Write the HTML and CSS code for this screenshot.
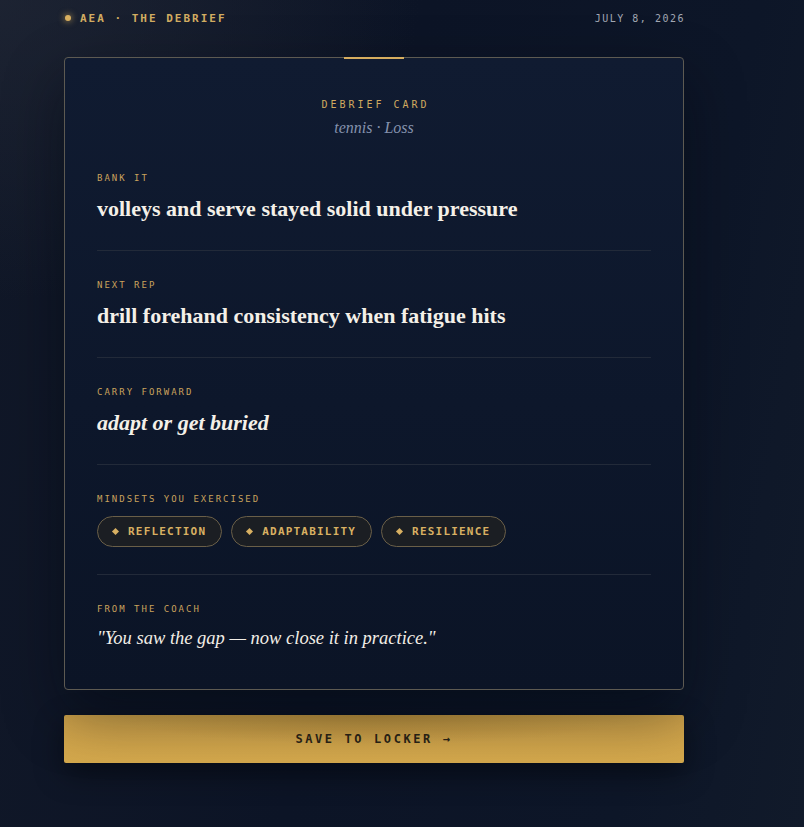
FILE: index.html
```html
<!DOCTYPE html>
<html lang="en">
<head>
<meta charset="utf-8">
<title>AEA · The Debrief</title>
<link rel="stylesheet" href="styles.css">
</head>
<body>
<main class="page">
  <header class="topbar">
    <div class="brand"><span class="brand-dot"></span>AEA · THE DEBRIEF</div>
    <div class="date">JULY 8, 2026</div>
  </header>

  <article class="card">
    <span class="card-accent"></span>
    <div class="card-head">
      <div class="card-kicker">DEBRIEF CARD</div>
      <div class="card-sub">tennis · Loss</div>
    </div>

    <section class="block">
      <div class="label">BANK IT</div>
      <p class="statement">volleys and serve stayed solid under pressure</p>
    </section>

    <section class="block">
      <div class="label">NEXT REP</div>
      <p class="statement">drill forehand consistency when fatigue hits</p>
    </section>

    <section class="block">
      <div class="label">CARRY FORWARD</div>
      <p class="statement statement-italic">adapt or get buried</p>
    </section>

    <section class="block">
      <div class="label">MINDSETS YOU EXERCISED</div>
      <ul class="pills">
        <li class="pill"><span class="pill-mark"></span>REFLECTION</li>
        <li class="pill"><span class="pill-mark"></span>ADAPTABILITY</li>
        <li class="pill"><span class="pill-mark"></span>RESILIENCE</li>
      </ul>
    </section>

    <section class="block block-last">
      <div class="label">FROM THE COACH</div>
      <p class="quote">"You saw the gap — now close it in practice."</p>
    </section>
  </article>

  <button class="save" type="button">SAVE TO LOCKER →</button>
</main>
</body>
</html>
```

FILE: styles.css
```css
* { box-sizing: border-box; }

html, body {
  margin: 0;
  min-height: 100%;
}

body {
  min-height: 827px;
  background:
    radial-gradient(ellipse 420px 300px at 0 0, rgba(38, 44, 58, 0.55), rgba(38, 44, 58, 0) 100%),
    linear-gradient(100deg, #111828 0%, #0c1426 45%, #0d1628 80%, #111a2a 100%);
  color: #f2eee6;
  font-family: "DejaVu Sans Mono", "Liberation Mono", monospace;
}

.page {
  width: 620px;
  margin-left: 64px;
  padding-top: 10px;
  padding-bottom: 40px;
}

/* top bar */
.topbar {
  display: flex;
  justify-content: space-between;
  align-items: center;
  height: 16px;
  margin-bottom: 31px;
}

.brand {
  display: flex;
  align-items: center;
  font-size: 11px;
  letter-spacing: 2px;
  color: #d2ad62;
  font-weight: bold;
}

.brand-dot {
  width: 6px;
  height: 6px;
  border-radius: 50%;
  background: #d9b060;
  box-shadow: 0 0 6px 1px rgba(217, 176, 96, 0.55);
  margin-left: 1px;
  margin-right: 9px;
}

.date {
  font-size: 10px;
  letter-spacing: 1.5px;
  color: #a2a8b3;
  margin-right: -1px;
}

/* card */
.card {
  position: relative;
  border: 1px solid #5d5a52;
  border-radius: 4px;
  background: linear-gradient(180deg, #101b31 0%, #0d172b 55%, #0b1426 100%);
  padding: 39px 32px 38px;
  box-shadow: 0 24px 60px rgba(3, 6, 14, 0.45);
}

.card-accent {
  position: absolute;
  top: -1px;
  left: 50%;
  width: 60px;
  height: 2px;
  margin-left: -30px;
  background: #d6ad5f;
}

.card-head {
  text-align: center;
  margin-bottom: 6px;
}

.card-kicker {
  font-size: 10px;
  line-height: 14px;
  letter-spacing: 3px;
  color: #d1aa5f;
  margin-right: -3px;
  padding-top: 1px;
}

.card-sub {
  margin-top: 6px;
  font-family: "Liberation Serif", "DejaVu Serif", serif;
  font-style: italic;
  font-size: 16px;
  line-height: 20px;
  color: #8592ad;
}

.block {
  padding: 28px 0 27px;
  border-bottom: 1px solid #222a39;
}

.block-last {
  border-bottom: none;
  padding-bottom: 0;
}

.label {
  font-size: 9px;
  line-height: 12px;
  letter-spacing: 2px;
  color: #c9a25c;
}

.statement {
  margin: 11px 0 0;
  font-family: "Liberation Serif", "DejaVu Serif", serif;
  font-weight: bold;
  font-size: 22px;
  line-height: 28px;
  color: #f4f0e8;
}

.statement-italic {
  font-style: italic;
}

.pills {
  list-style: none;
  margin: 11px 0 0;
  padding: 0;
  display: flex;
  gap: 9px;
}

.pill {
  display: flex;
  align-items: center;
  height: 31px;
  padding: 0 15px;
  border: 1px solid #6a5f48;
  border-radius: 16px;
  background: #1b1e23;
  font-size: 11px;
  font-weight: bold;
  letter-spacing: 1.2px;
  color: #d8b062;
}

.pill-mark {
  width: 5px;
  height: 5px;
  background: #d8b062;
  transform: rotate(45deg);
  margin-right: 10px;
}

.quote {
  margin: 10px 0 0;
  font-family: "Liberation Serif", "DejaVu Serif", serif;
  font-style: italic;
  font-size: 18.5px;
  line-height: 26px;
  color: #f2eee6;
}

/* call to action */
.save {
  display: block;
  width: 100%;
  height: 48px;
  margin-top: 25px;
  border: none;
  border-radius: 2px;
  background:
    radial-gradient(ellipse 260px 30px at 50% 0, rgba(150, 112, 40, 0.35), rgba(150, 112, 40, 0) 100%),
    linear-gradient(180deg, #cfa34a 0%, #d5a94d 100%);
  box-shadow: 0 10px 30px rgba(0, 0, 0, 0.45);
  font-family: "DejaVu Sans Mono", "Liberation Mono", monospace;
  font-size: 12px;
  font-weight: bold;
  letter-spacing: 2.6px;
  color: #2b2416;
  cursor: pointer;
}
```
